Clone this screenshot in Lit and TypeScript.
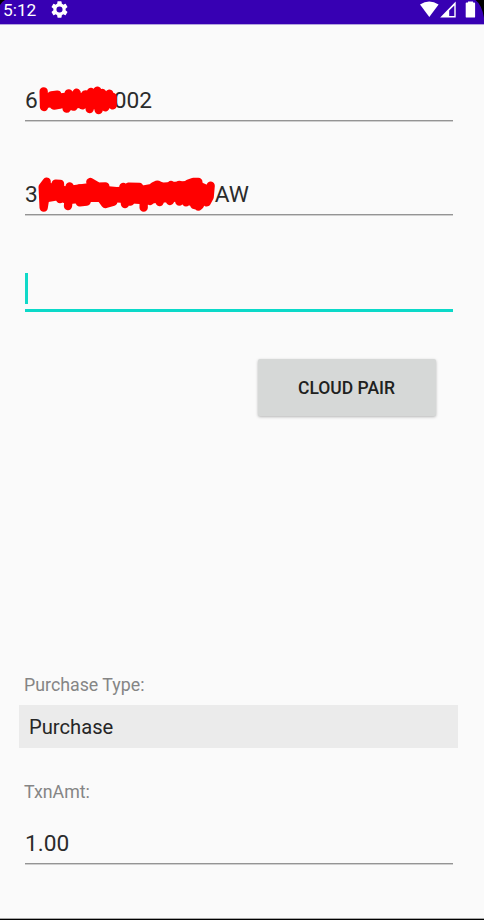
import { LitElement, html, css, svg } from "lit";
import { customElement } from "lit/decorators.js";

@customElement("status-bar")
class StatusBar extends LitElement {
  static styles = css`
    :host { display: flex; height: 25px; box-sizing: border-box; background: #3700b3; background-clip: padding-box; color: #fff; position: relative; overflow: hidden; border-bottom: 1px solid #b3a4dd; }
    .time { font-size: 17.3px; line-height: 21px; margin-left: 3px; width: 48px; }
    .gear { width: 17px; height: 17px; margin-top: 1px; }
    .system { width: 64px; height: 24px; margin-left: auto; flex: none; }
    .corner { position: absolute; left: 0; top: 0; width: 6px; height: 6px; }
  `;
  render() {
    return html`
      <span class="time">5:12</span>
      <svg class="gear" viewBox="2 2 20 20" fill="#fff"><path d="M19.14 12.94c.04-.3.06-.61.06-.94 0-.32-.02-.64-.07-.94l2.03-1.58a.49.49 0 0 0 .12-.61l-1.92-3.32a.49.49 0 0 0-.59-.22l-2.39.96c-.5-.38-1.03-.7-1.62-.94l-.36-2.54A.48.48 0 0 0 13.92 2.4h-3.84c-.24 0-.43.17-.47.41l-.36 2.54c-.59.24-1.13.57-1.62.94l-2.39-.96a.48.48 0 0 0-.59.22L2.74 8.87a.48.48 0 0 0 .12.61l2.03 1.58c-.05.3-.09.63-.09.94s.02.64.07.94l-2.03 1.58a.49.49 0 0 0-.12.61l1.92 3.32c.12.22.37.29.59.22l2.39-.96c.5.38 1.03.7 1.62.94l.36 2.54c.05.24.24.41.48.41h3.84c.24 0 .44-.17.47-.41l.36-2.54c.59-.24 1.13-.56 1.62-.94l2.39.96c.22.08.47 0 .59-.22l1.92-3.32a.48.48 0 0 0-.12-.61zM12 15.6A3.6 3.6 0 1 1 12 8.4a3.6 3.6 0 0 1 0 7.2z"/></svg>
      <svg class="system" viewBox="420 0 64 24" fill="#fff">
        <path d="M420 4.600Q429.200-1.600 438.600 4.600L429.300 17z"/>
        <path fill-rule="evenodd" d="M455.700 1.600V17.600H440.200zM454.300 5.400L449.200 10.600V16H454.300z"/>
        <path d="M468 2.200V1.600h5v.8h1.200q.9 0 .9.9v13.400q0 .9-.9.9h-7.600q-.9 0-.9-.9V3.300q0-.9.9-.9H468z"/>
        <path d="M475.500 0Q482 5 484 18V0z" fill="#000"/>
      </svg>
      <svg class="corner" viewBox="0 0 6 6"><path d="M0 0h5Q2 1.500 0 5z" fill="#000"/></svg>`;
  }
}

const scribbles = {
  none: svg``,
  short: svg`
    <path class="core" d="M101 60L140 62L178 58L226 60L262 52L305 60V90L264 98L220 92L170 96L130 90L104 94z"/>
    <path d="M101 49L102 96M124 61L142 59L149 89L132 92M176 55L170 101L200 53L191 95M226 58L217 91M243 51L239 102M262 47L266 105M277 54L286 97M298 56L308 91L308 66"/>`,
  long: svg`
    <path class="core" d="M97 68L135 58L165 70L240 60L280 68L320 72L390 69L440 60L560 52L595 68V106L560 122L500 104L440 108L400 112L310 106L240 104L210 108L172 112L145 100L110 106z"/>
    <path d="M110 50L98 66L101 128L112 60M137 56L150 57V102M174 123L179 64M209 70V112L230 110M241 51L264 65L286 64M275 102L286 117L310 110M340 66L345 117M361 110L356 65L388 66M401 128V108M420 108L431 64L442 59L453 64L449 111M483 60L480 108M508 60V110M528 62V112M535 56L550 51H565L563 122L553 120M565 125L570 120M590 112L599 96L602 62"/>`,
};

@customElement("edit-field")
class EditField extends LitElement {
  static properties = { value: {}, tail: {}, mask: {}, active: { type: Boolean, reflect: true } };
  declare value: string;
  declare tail: string;
  declare mask: "none" | "short" | "long";
  declare active: boolean;
  constructor() {
    super();
    this.value = "";
    this.tail = "";
    this.mask = "none";
    this.active = false;
  }
  static styles = css`
    :host { display: flex; align-items: center; position: relative; height: 42px; box-sizing: border-box; margin: 0 31px 0 25px; padding-top: 2px; border-bottom: 1px solid #949494; box-shadow: 0 1px #cfcfcf; font-size: 22.7px; color: #2b2b2b; }
    :host([active]) { padding-top: 0; border-bottom: 3px solid #0bd9c8; box-shadow: none; }
    .caret { width: 3px; height: 31px; margin-bottom: 4px; background: #10d9c8; }
    .short-gap { width: 76px; }
    .long-gap { width: 177px; }
    .ink { position: absolute; fill: none; stroke: red; stroke-width: 25; stroke-linejoin: round; stroke-linecap: round; }
    .core { fill: red; stroke-width: 12; }
    .short { left: -15px; top: -4px; width: 160px; height: 55px; }
    .long { left: -15px; top: -8px; width: 250px; height: 60px; }
  `;
  render() {
    if (this.active) return html`<span class="caret"></span>`;
    const masked = this.mask !== "none";
    return html`<span>${this.value}</span>
      ${masked ? html`<span class="${this.mask}-gap"></span><span>${this.tail}</span>
      <svg class="ink ${this.mask}" viewBox=${this.mask === "short" ? "0 0 480 165" : "0 0 750 180"}>${scribbles[this.mask]}</svg>` : ""}`;
  }
}

@customElement("app-root")
class AppRoot extends LitElement {
  static styles = css`
    :host { display: flex; flex-direction: column; height: 920px; box-sizing: border-box; background: #fafafa; font-family: Roboto, sans-serif; border-bottom: 1px solid #000; overflow: hidden; }
    .account { margin-top: 54px; }
    .serial { margin-top: 52px; }
    .code { margin-top: 56px; height: 41px; }
    .pair { align-self: flex-end; width: 178px; height: 57px; margin: 47px 48px 0 0; padding: 0 1px 0 0; border: 0; border-radius: 2px; background: #d6d8d7; color: #202120; font: 500 17.5px Roboto, sans-serif; box-shadow: 0 1px 3px rgba(0,0,0,.28); }
    .label { margin-left: 24px; height: 22px; line-height: 22px; font-size: 17.8px; color: #858585; }
    .type-label { margin-top: 258px; }
    .type { margin: 9px 26px 0 19px; height: 43px; line-height: 44px; padding-left: 10px; background: #ebebeb; color: #262626; font-size: 20.2px; }
    .amount-label { margin-top: 33px; }
    .amount { margin-top: 19px; }
    .edge { margin-top: auto; height: 1px; background: #a6a6a6; }
  `;
  render() {
    return html`
      <status-bar></status-bar>
      <edit-field class="account" value="6" tail="002" mask="short"></edit-field>
      <edit-field class="serial" value="3" tail="AW" mask="long"></edit-field>
      <edit-field class="code" active></edit-field>
      <button class="pair">CLOUD PAIR</button>
      <div class="label type-label">Purchase Type:</div>
      <div class="type">Purchase</div>
      <div class="label amount-label">TxnAmt:</div>
      <edit-field class="amount" value="1.00"></edit-field>
      <div class="edge"></div>`;
  }
}
